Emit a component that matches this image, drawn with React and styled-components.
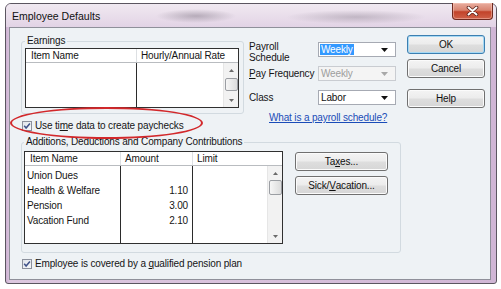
import styled, { createGlobalStyle } from 'styled-components'

const GlobalStyle = createGlobalStyle`
  html, body { margin: 0; padding: 0; background: #ffffff; }
  body {
    font-family: "Liberation Sans", Arial, sans-serif;
    font-size: 10px;
    letter-spacing: -0.15px;
    color: #151515;
  }
  * { box-sizing: border-box; }
`

const Page = styled.div`
  width: 501px;
  height: 289px;
  padding: 3px 4px 5px 5px;
`

const Window = styled.div`
  width: 492px;
  height: 281px;
  display: flex;
  flex-direction: column;
  border: 1px solid #5b5660;
  border-radius: 6px 6px 3px 3px;
  background: linear-gradient(90deg, #cdb2d2 0px, #dcc7df 4px, #d8c1dc 50%, #d0b6d5 100%);
`

const TitleBar = styled.div`
  height: 23px;
  display: flex;
  align-items: center;
  padding-left: 6px;
  border-radius: 5px 5px 0 0;
  background:
    radial-gradient(ellipse 40px 7px at 190px 12px, rgba(120, 110, 125, 0.45), transparent),
    radial-gradient(ellipse 70px 7px at 350px 13px, rgba(120, 110, 125, 0.35), transparent),
    linear-gradient(180deg, #f0e9f1 0%, #e8dcea 60%, #e2d3e5 100%);
`

const Title = styled.span`
  font-size: 10.5px;
  letter-spacing: 0;
  color: #101010;
`

const CloseButton = styled.div`
  margin-left: auto;
  margin-right: 3px;
  align-self: flex-start;
  margin-top: -1px;
  width: 41px;
  height: 17px;
  display: flex;
  align-items: center;
  justify-content: center;
  border: 1px solid #6f2a1f;
  border-top: none;
  border-radius: 0 0 4px 4px;
  background: linear-gradient(180deg, #e8ad9f 0%, #d98470 45%, #c2432a 55%, #cf6149 100%);
  box-shadow: inset 0 0 0 1px rgba(255, 210, 200, 0.45);
`

const Client = styled.div`
  position: relative;
  flex: 1;
  margin: 0 5px 3px 3px;
  border: 1px solid #8f909a;
  background: #eef2f5;
  padding: 7px 4px 0 11px;
  display: flex;
  gap: 6px;
`

const LeftArea = styled.div`
  width: 380px;
  display: flex;
  flex-direction: column;
`

const TopGrid = styled.div`
  display: grid;
  grid-template-columns: 223px 1fr;
  grid-template-rows: auto auto;
  align-items: start;
`

const Group = styled.fieldset`
  margin: ${p => p.$top || 0}px 0 0 0;
  width: ${p => p.$width}px;
  border: 1px solid #d2dae0;
  border-radius: 3px;
  padding: ${p => p.$pad};
  min-width: 0;
`

const Legend = styled.legend`
  padding: 0 2px;
  line-height: 12px;
  height: 12px;
`

const GroupContent = styled.div`
  display: flex;
  align-items: flex-start;
`

const ListFrame = styled.div`
  width: ${p => p.$width}px;
  border: 1px solid #303030;
  background: #ffffff;
  display: flex;
  flex-direction: column;
`

const HeaderRow = styled.div`
  display: flex;
  height: 14px;
  border-bottom: 1px solid #b9bcc0;
  background: #ffffff;
`

const HeaderCell = styled.div`
  flex: ${p => p.$last ? '1' : `0 0 ${p.$width}px`};
  padding-left: ${p => p.$first ? 5 : 4}px;
  line-height: 13px;
  border-right: 1px solid ${p => p.$last ? 'transparent' : '#dde0e3'};
  white-space: nowrap;
  overflow: hidden;
`

const Body = styled.div`
  height: ${p => p.$height}px;
  display: flex;
`

const Column = styled.div`
  width: ${p => p.$width}px;
  padding-top: 2px;
  border-right: ${p => p.$divider ? '1px solid #2b2b2b' : 'none'};
  text-align: ${p => p.$align || 'left'};
`

const Cell = styled.div`
  height: 15px;
  line-height: 15px;
  padding: 0 4px 0 2px;
  white-space: nowrap;
`

const ScrollTrack = styled.div`
  width: 15px;
  display: flex;
  flex-direction: column;
  align-items: center;
  background: #f2f2f2;
  border-left: 1px solid #e6e6e6;
`

const ArrowBox = styled.div`
  height: ${p => p.$h}px;
  width: 100%;
  display: flex;
  align-items: center;
  justify-content: center;
`

const Thumb = styled.div`
  width: 13px;
  height: ${p => p.$h}px;
  border: 1px solid #9b9ea3;
  border-radius: 2px;
  background: linear-gradient(90deg, #f6f6f6 0%, #e9e9e9 50%, #dcdcdc 100%);
`

const Spacer = styled.div`
  flex: 1;
`

const Fields = styled.div`
  grid-column: 2;
  grid-row: 1 / span 2;
  margin-left: 5px;
  padding-top: 6px;
  width: 147px;
  display: flex;
  flex-direction: column;
`

const FieldRow = styled.div`
  display: flex;
  align-items: flex-start;
  margin-top: ${p => p.$top}px;
`

const FieldLabel = styled.div`
  width: 69px;
  line-height: ${p => p.$lh}px;
  white-space: nowrap;
`

const Combo = styled.div`
  width: 78px;
  height: 15px;
  margin-top: ${p => p.$top || 0}px;
  display: flex;
  align-items: center;
  padding: 0 7px 0 1px;
  border: 1px solid ${p => p.$disabled ? '#c9ccd1' : '#a6aab3'};
  background: ${p => p.$disabled ? '#f4f4f4' : '#ffffff'};
  color: ${p => p.$disabled ? '#9d9d9d' : '#111111'};
`

const ComboValue = styled.span`
  padding: 0 1px;
  line-height: 11px;
  background: ${p => p.$selected ? '#3399ff' : 'transparent'};
  color: ${p => p.$selected ? '#ffffff' : 'inherit'};
`

const ComboArrow = styled.svg`
  margin-left: auto;
`

const HelpLink = styled.a`
  margin: 6px 0 0 20px;
  line-height: 13px;
  color: #1a4cb8;
  text-decoration: underline;
  white-space: nowrap;
`

const CheckRow = styled.label`
  display: flex;
  align-items: center;
  gap: 3px;
  height: 13px;
  margin: ${p => p.$top}px 0 0 1px;
  white-space: nowrap;
`

const Key = styled.span`
  text-decoration: underline;
`

const ButtonColumn = styled.div`
  width: 78px;
  display: flex;
  flex-direction: column;
`

const PushButton = styled.div`
  width: ${p => p.$width || 78}px;
  height: 19px;
  margin-top: ${p => p.$top || 0}px;
  display: flex;
  align-items: center;
  justify-content: center;
  border: 1px solid ${p => p.$focus ? '#3c7fb1' : '#707070'};
  border-radius: 3px;
  background: linear-gradient(180deg, #f4f4f4 0%, #ececec 48%, #dedede 52%, #d6d6d6 100%);
  box-shadow: ${p => p.$focus ? 'inset 0 0 0 1px #a6d9f4' : 'inset 0 0 0 1px #fbfbfb'};
  color: #111111;
  white-space: nowrap;
`

const SideButtons = styled.div`
  margin-left: 12px;
  display: flex;
  flex-direction: column;
`

const Annotation = styled.div`
  position: absolute;
  left: 0;
  top: 79px;
  width: 193px;
  height: 32px;
  border: 2px solid #d2282b;
  border-radius: 50%;
  pointer-events: none;
`

const earningsColumns = [
  { title: 'Item Name', width: 111 },
  { title: 'Hourly/Annual Rate', width: 86 },
]

const additionColumns = [
  { title: 'Item Name', width: 96 },
  { title: 'Amount', width: 72, align: 'right' },
  { title: 'Limit', width: 74 },
]

const additionRows = [
  ['Union Dues', '', ''],
  ['Health & Welfare', '1.10', ''],
  ['Pension', '3.00', ''],
  ['Vacation Fund', '2.10', ''],
]

function Triangle({ up, color = '#3a3a3a' }) {
  return (
    <svg width="5" height="3" viewBox="0 0 5 3">
      <path d={up ? 'M0 3 L2.5 0 L5 3 Z' : 'M0 0 L5 0 L2.5 3 Z'} fill={color} />
    </svg>
  )
}

function ScrollBar({ thumb, upH, downH }) {
  return (
    <ScrollTrack>
      <ArrowBox $h={upH}><Triangle up color="#6a6a6a" /></ArrowBox>
      <Thumb $h={thumb} />
      <Spacer />
      <ArrowBox $h={downH}><Triangle color="#6a6a6a" /></ArrowBox>
    </ScrollTrack>
  )
}

function ListView({ columns, rows = [], width, bodyHeight, thumb, upH, downH }) {
  return (
    <ListFrame $width={width}>
      <HeaderRow>
        {columns.map((c, i) => (
          <HeaderCell
            key={c.title}
            $first={i === 0}
            $last={i === columns.length - 1}
            $width={c.width}
          >
            {c.title}
          </HeaderCell>
        ))}
      </HeaderRow>
      <Body $height={bodyHeight}>
        {columns.map((c, i) => (
          <Column key={c.title} $width={c.width} $divider={i < columns.length - 1} $align={c.align}>
            {rows.map((r, j) => <Cell key={j}>{r[i]}</Cell>)}
          </Column>
        ))}
        <ScrollBar thumb={thumb} upH={upH} downH={downH} />
      </Body>
    </ListFrame>
  )
}

function CheckBox() {
  return (
    <svg width="10" height="10" viewBox="0 0 10 10">
      <defs>
        <linearGradient id="cbfill" x1="0" y1="0" x2="1" y2="1">
          <stop offset="0" stopColor="#dfe3ea" />
          <stop offset="1" stopColor="#f7f8fa" />
        </linearGradient>
      </defs>
      <rect x="0.5" y="0.5" width="9" height="9" fill="url(#cbfill)" stroke="#8b909c" />
      <path d="M2.2 4.8 L4.1 7 L7.9 2.4" fill="none" stroke="#3f5289" strokeWidth="1.5" />
    </svg>
  )
}

function CloseGlyph() {
  return (
    <svg width="13" height="10" viewBox="0 0 13 10">
      <path d="M2.5 1.5 L10.5 8.5 M10.5 1.5 L2.5 8.5" stroke="#5a2018" strokeWidth="3.6" strokeLinecap="round" />
      <path d="M2.5 1.5 L10.5 8.5 M10.5 1.5 L2.5 8.5" stroke="#ffffff" strokeWidth="2" strokeLinecap="round" />
    </svg>
  )
}

function Dropdown({ value, selected, disabled, top }) {
  return (
    <Combo $disabled={disabled} $top={top}>
      <ComboValue $selected={selected}>{value}</ComboValue>
      <ComboArrow width="7" height="4" viewBox="0 0 7 4">
        <path d="M0 0 L7 0 L3.5 4 Z" fill={disabled ? '#a8a8a8' : '#111111'} />
      </ComboArrow>
    </Combo>
  )
}

function App() {
  return (
    <Page>
      <GlobalStyle />
      <Window>
        <TitleBar>
          <Title>Employee Defaults</Title>
          <CloseButton><CloseGlyph /></CloseButton>
        </TitleBar>
        <Client>
          <LeftArea>
            <TopGrid>
              <Group $width={223} $pad="1px 4px 5px 3px">
                <Legend>Earnings</Legend>
                <ListView columns={earningsColumns} width={214} bodyHeight={44} thumb={13} upH={15} downH={13} />
              </Group>
              <Fields>
                <FieldRow $top={0}>
                  <FieldLabel $lh={11}>Payroll<br />Schedule</FieldLabel>
                  <Dropdown value="Weekly" selected top={1} />
                </FieldRow>
                <FieldRow $top={3}>
                  <FieldLabel $lh={15}><Key>P</Key>ay Frequency</FieldLabel>
                  <Dropdown value="Weekly" disabled />
                </FieldRow>
                <FieldRow $top={9}>
                  <FieldLabel $lh={15}>Class</FieldLabel>
                  <Dropdown value="Labor" />
                </FieldRow>
                <HelpLink>What is a payroll schedule?</HelpLink>
              </Fields>
              <CheckRow $top={5}>
                <CheckBox />
                <span>Use ti<Key>m</Key>e data to create paychecks</span>
              </CheckRow>
            </TopGrid>
            <Group $top={4} $width={380} $pad="3px 2px 8px 2px">
              <Legend>Additions, Deductions and Company Contributions</Legend>
              <GroupContent>
                <ListView columns={additionColumns} rows={additionRows} width={259} bodyHeight={77} thumb={15} upH={14} downH={13} />
                <SideButtons>
                  <PushButton $width={93} $top={1}>Ta<Key>x</Key>es...</PushButton>
                  <PushButton $width={93} $top={5}>Sick/<Key>V</Key>acation...</PushButton>
                </SideButtons>
              </GroupContent>
            </Group>
            <CheckRow $top={4}>
              <CheckBox />
              <span>Employee is covered by a <Key>q</Key>ualified pension plan</span>
            </CheckRow>
          </LeftArea>
          <ButtonColumn>
            <PushButton $focus>OK</PushButton>
            <PushButton $top={5}>Cancel</PushButton>
            <PushButton $top={11}>Help</PushButton>
          </ButtonColumn>
          <Annotation />
        </Client>
      </Window>
    </Page>
  )
}

export default App
